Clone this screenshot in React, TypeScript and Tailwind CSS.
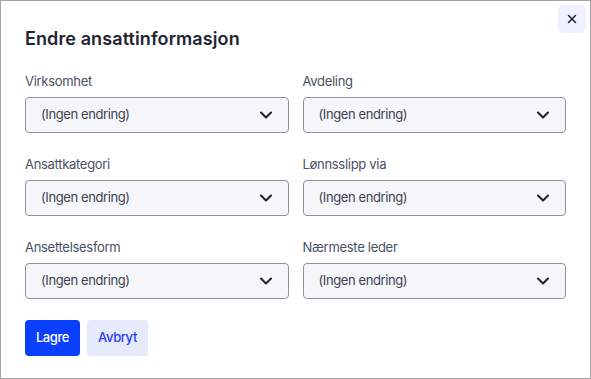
import { ChevronDown, X } from "lucide-react";

const fields = [
  "Virksomhet",
  "Avdeling",
  "Ansattkategori",
  "Lønnsslipp via",
  "Ansettelsesform",
  "Nærmeste leder",
];

function SelectField({ label }: { label: string }) {
  return (
    <div className="flex flex-col gap-1.5">
      <span className="text-[13px] leading-5 tracking-[-0.3px] text-[#4b5162]">
        {label}
      </span>
      <div className="flex h-9 items-center justify-between rounded border border-[#8d929d] bg-[#f5f6fa] pl-[15px] pr-3 text-[13px] tracking-[-0.4px] text-[#3d4351]">
        <span>(Ingen endring)</span>
        <ChevronDown size={20} strokeWidth={2.5} className="text-[#1f2533]" />
      </div>
    </div>
  );
}

export default function App() {
  return (
    <div className="relative flex h-[379px] w-[591px] flex-col border border-[#a3a3a3] bg-white px-6 pt-6 font-['Inter',sans-serif]">
      <button
        type="button"
        className="absolute right-1 top-1 flex h-7 w-7 items-center justify-center rounded-md bg-[#eef0fd] text-[#1f2533]"
      >
        <X size={14} strokeWidth={2.5} />
      </button>
      <h2 className="text-lg font-semibold leading-7 tracking-[0.1px] text-[#1e2433]">
        Endre ansattinformasjon
      </h2>
      <div className="mt-[18px] grid grid-cols-2 gap-x-[14px] gap-y-[21px]">
        {fields.map((f) => (
          <SelectField key={f} label={f} />
        ))}
      </div>
      <div className="mt-[21px] flex gap-[7px]">
        <button
          type="button"
          className="h-9 w-[55px] rounded bg-[#0a3ffe] text-[13px] font-medium tracking-[-0.4px] text-white"
        >
          Lagre
        </button>
        <button
          type="button"
          className="h-9 w-[61px] rounded bg-[#e6eafd] text-[13px] font-medium tracking-[-0.4px] text-[#2a3cf5]"
        >
          Avbryt
        </button>
      </div>
    </div>
  );
}
